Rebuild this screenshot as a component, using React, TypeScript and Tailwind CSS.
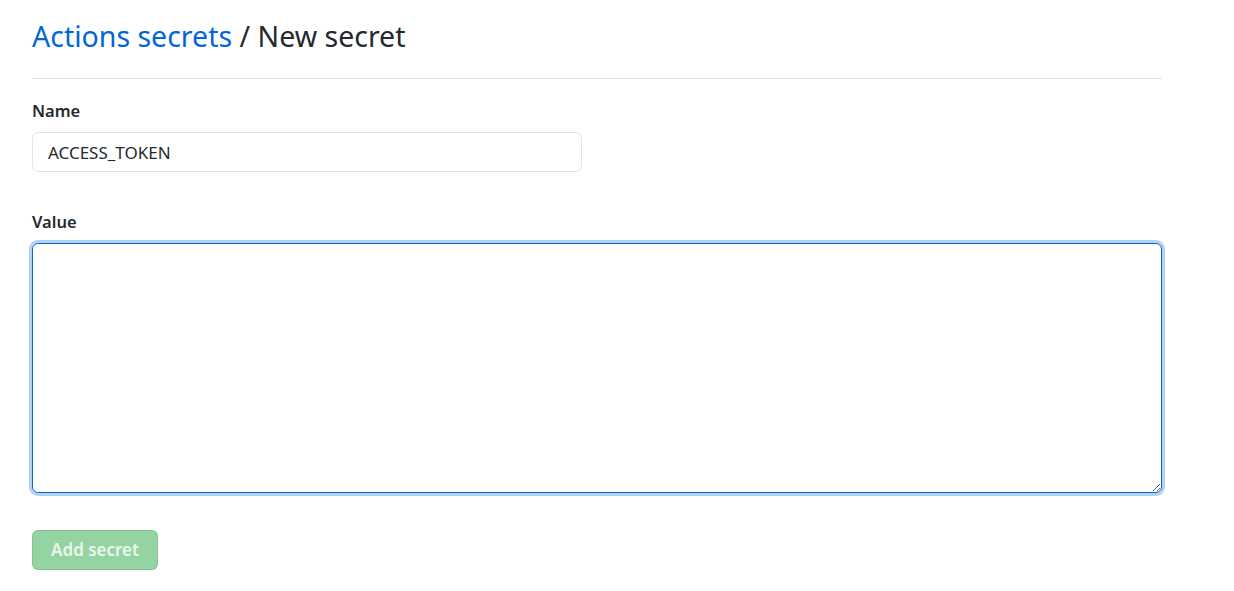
export default function App() {
  return (
    <div
      className="min-h-screen bg-white pl-8 text-[#24292e]"
      style={{ fontFamily: '"Noto Sans", "Open Sans", sans-serif' }}
    >
      <div className="w-[1130px]">
        <div className="border-b border-[#e1e4e8] pt-[14px] pb-[19px]">
          <h2 className="text-[28.5px] leading-[45px] font-normal">
            <a className="text-[#0366d6]">Actions secrets</a> / New secret
          </h2>
        </div>

        <form className="pt-[19px]">
          <label className="block text-[16.5px] leading-[26px] font-semibold">Name</label>
          <input
            readOnly
            value="ACCESS_TOKEN"
            className="mt-2 h-10 w-[550px] rounded-md border border-[#e1e4e8] px-[15px] text-[17px] text-[#24292e] outline-none"
          />

          <label className="mt-[37px] block text-[16.5px] leading-[26px] font-semibold">Value</label>
          <textarea
            className="mt-2 block h-[250px] w-full rounded-md border border-[#0366d6] px-[10px] py-2 text-[17px] outline-none shadow-[0_0_0_3px_rgba(3,102,214,0.3)]"
          />

          <button
            type="button"
            disabled
            className="mt-[37px] h-10 w-[126px] rounded-md border border-[rgba(27,31,35,0.1)] bg-[#94d3a2] text-[17px] font-semibold text-white/80"
          >
            Add secret
          </button>
        </form>
      </div>
    </div>
  );
}
